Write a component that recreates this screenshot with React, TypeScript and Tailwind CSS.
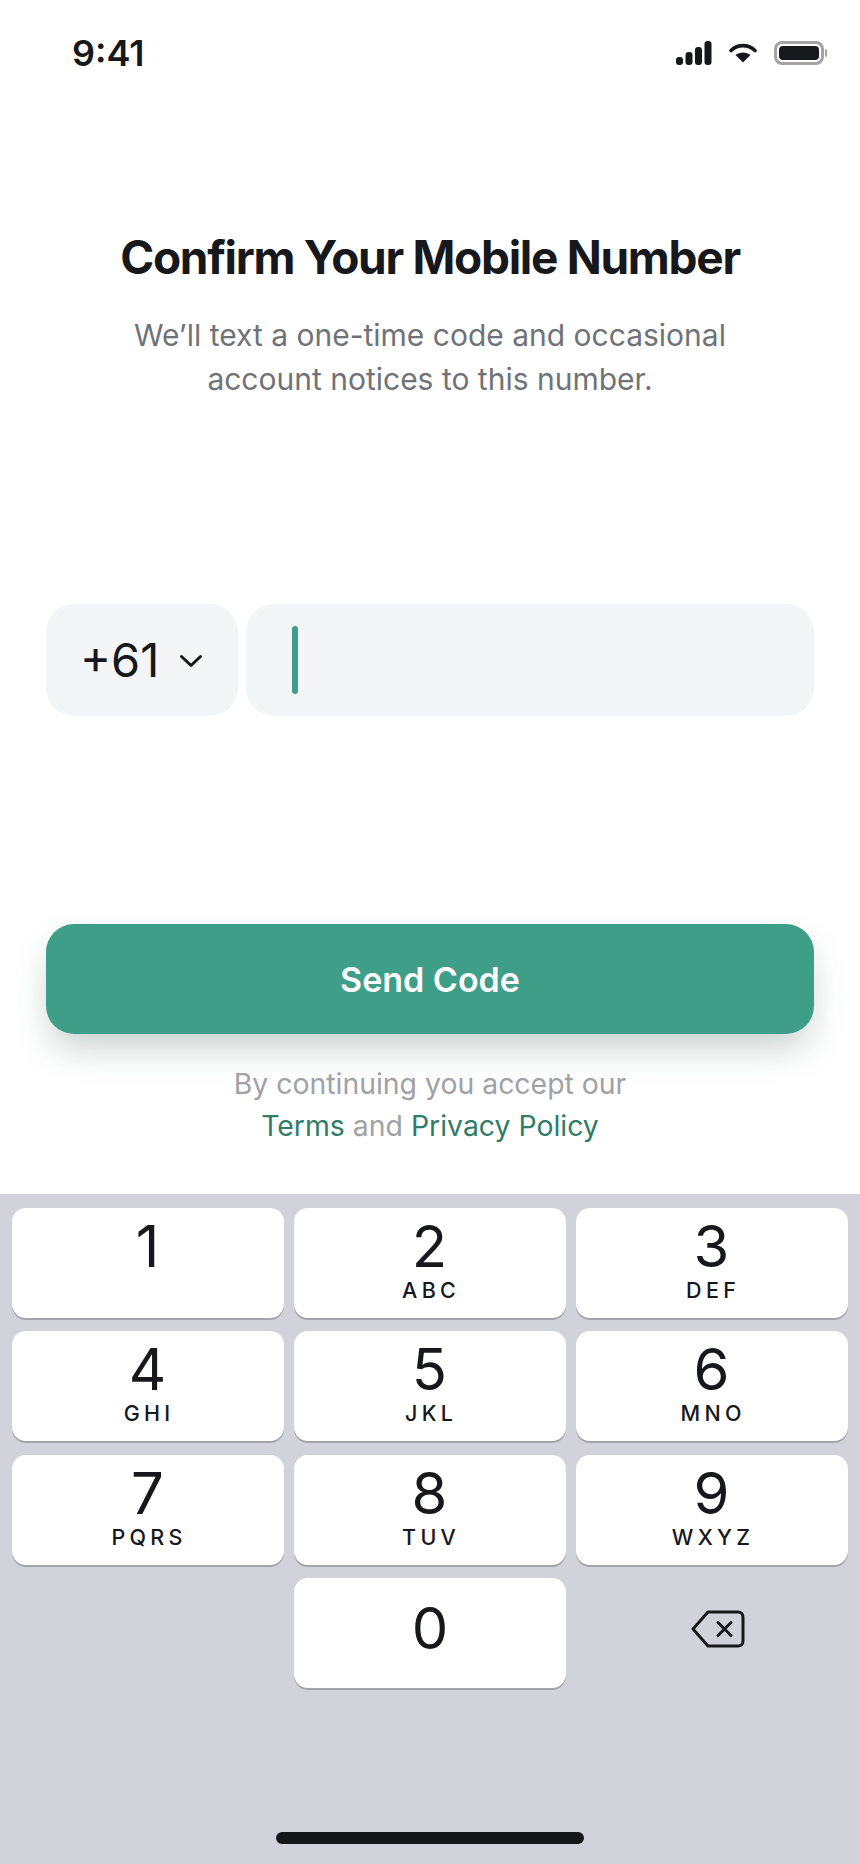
const keys = [
  { num: "1", sub: "" },
  { num: "2", sub: "ABC" },
  { num: "3", sub: "DEF" },
  { num: "4", sub: "GHI" },
  { num: "5", sub: "JKL" },
  { num: "6", sub: "MNO" },
  { num: "7", sub: "PQRS" },
  { num: "8", sub: "TUV" },
  { num: "9", sub: "WXYZ" },
];

function Key({ num, sub }: { num: string; sub: string }) {
  return (
    <div className="h-[110px] rounded-[14px] bg-white shadow-[0_2px_0_#a3a4aa] flex flex-col items-center pt-[6px] pr-[1px]">
      <div className="text-[58px] leading-[64px] text-[#17181c]">{num}</div>
      {sub && (
        <div className="text-[21.5px] leading-[24px] font-medium tracking-[0.2em] mr-[-0.15em] text-[#17181c]">
          {sub}
        </div>
      )}
    </div>
  );
}

export default function App() {
  return (
    <div className="w-[860px] h-[1864px] bg-white flex flex-col overflow-hidden font-['Inter',sans-serif]">
      <div className="h-[106px] pl-[72px] pr-[33px] flex items-center justify-between shrink-0">
        <div className="text-[36px] font-semibold text-[#17181c]">9:41</div>
        <div className="flex items-center gap-[17px]">
          <svg width="36" height="24" viewBox="0 0 36 24" fill="#17181c">
            <rect x="0" y="16" width="7" height="8" rx="3" />
            <rect x="9.5" y="11" width="7" height="13" rx="3" />
            <rect x="19" y="6" width="7" height="18" rx="3" />
            <rect x="28.5" y="0" width="7" height="24" rx="3" />
          </svg>
          <svg width="28" height="20" viewBox="0 0 28 20" fill="none">
            <path d="M2 7.5C9 1 19 1 26 7.5" stroke="#17181c" strokeWidth="3.6" strokeLinecap="round" />
            <path d="M14 19.5L6.5 12C10.5 8.5 17.5 8.5 21.5 12Z" fill="#17181c" />
          </svg>
          <div className="flex items-center gap-[1px]">
            <div className="w-[50px] h-[24px] rounded-[8px] border-[3px] border-[#a3a3a6] p-[2px]">
              <div className="w-full h-full rounded-[4px] bg-[#17181c]" />
            </div>
            <div className="w-[2px] h-[8px] rounded-r-full bg-[#a3a3a6]" />
          </div>
        </div>
      </div>

      <div className="pt-[124px] text-center shrink-0">
        <h1 className="text-[46px] leading-[54px] font-bold tracking-[-0.028em] text-[#17181c]">
          Confirm Your Mobile Number
        </h1>
        <p className="mt-[29px] text-[30px] leading-[44px] text-[#6f7378]">
          We’ll text a one-time code and occasional
          <br />
          account notices to this number.
        </p>
      </div>

      <div className="mt-[203px] mx-[46px] flex gap-[8px] shrink-0">
        <div className="w-[192px] h-[112px] rounded-[28px] bg-[#f3f5f7] flex items-center pl-[34px]">
          <span className="text-[47px] text-[#17181c]">+61</span>
          <svg className="ml-[20px] mt-[2px]" width="24" height="14" viewBox="0 0 24 14" fill="none">
            <path d="M2.5 2.5L12 11.5L21.5 2.5" stroke="#17181c" strokeWidth="3" strokeLinecap="round" strokeLinejoin="round" />
          </svg>
        </div>
        <div className="flex-1 h-[112px] rounded-[28px] bg-[#f3f5f7] flex items-center pl-[46px]">
          <div className="w-[6px] h-[68px] rounded-full bg-[#3f9e87]" />
        </div>
      </div>

      <div className="mt-[208px] mx-[46px] h-[110px] rounded-[28px] bg-[#3f9e87] shadow-[0_18px_36px_-6px_rgba(40,80,70,0.28)] flex items-center justify-center shrink-0">
        <span className="text-[34px] font-semibold text-white">Send Code</span>
      </div>

      <div className="mt-[29px] text-center text-[28.4px] leading-[42px] text-[#a0a1a6] shrink-0">
        By continuing you accept our
        <br />
        <span className="text-[#2f7d68]">Terms</span> and{" "}
        <span className="text-[#2f7d68]">Privacy Policy</span>
      </div>

      <div className="mt-auto h-[670px] bg-[#d1d2da] pt-[14px] px-[12px] flex flex-col shrink-0">
        <div className="grid grid-cols-3 gap-x-[10px] gap-y-[13.4px]">
          {keys.map((k) => (
            <Key key={k.num} num={k.num} sub={k.sub} />
          ))}
          <div />
          <div className="h-[110px] rounded-[14px] bg-white shadow-[0_2px_0_#a3a4aa] flex items-center justify-center pb-[10px]">
            <span className="text-[58px] leading-[64px] text-[#17181c]">0</span>
          </div>
          <div className="flex items-center justify-center pl-[12px] pb-[8px]">
            <svg width="54" height="38" viewBox="0 0 54 38" fill="none" stroke="#17181c" strokeWidth="3" strokeLinecap="round" strokeLinejoin="round">
              <path d="M17 2H47C50 2 52 4 52 7V31C52 34 50 36 47 36H17L2 19Z" />
              <path d="M27 12.5L40 25.5M40 12.5L27 25.5" />
            </svg>
          </div>
        </div>
        <div className="mt-auto mb-[20px] mx-auto w-[308px] h-[12px] rounded-full bg-[#15161a]" />
      </div>
    </div>
  );
}
